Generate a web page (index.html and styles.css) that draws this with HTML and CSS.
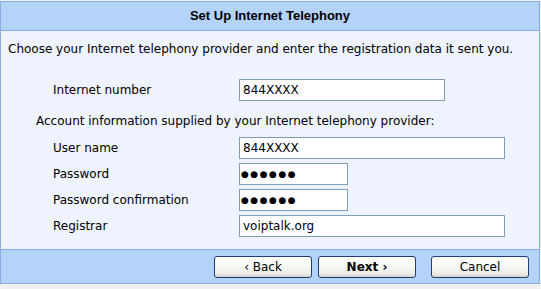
FILE: index.html
```html
<!DOCTYPE html>
<html>
<head>
<meta charset="utf-8">
<link rel="stylesheet" href="styles.css">
</head>
<body>
<div class="dialog">
  <div class="header">Set Up Internet Telephony</div>
  <div class="content">
    <p class="intro">Choose your Internet telephony provider and enter the registration data it sent you.</p>
    <div class="row first">
      <span class="label">Internet number</span>
      <div class="field w-mid">844XXXX</div>
    </div>
    <p class="section">Account information supplied by your Internet telephony provider:</p>
    <div class="rows">
      <div class="row">
        <span class="label">User name</span>
        <div class="field w-long">844XXXX</div>
      </div>
      <div class="row">
        <span class="label">Password</span>
        <div class="field w-short dots">●●●●●●</div>
      </div>
      <div class="row">
        <span class="label">Password confirmation</span>
        <div class="field w-short dots">●●●●●●</div>
      </div>
      <div class="row">
        <span class="label">Registrar</span>
        <div class="field w-long">voiptalk.org</div>
      </div>
    </div>
  </div>
  <div class="footer">
    <button class="btn">‹ Back</button>
    <button class="btn primary">Next ›</button>
    <button class="btn cancel">Cancel</button>
  </div>
</div>
</body>
</html>
```
FILE: styles.css
```css
html, body {
  margin: 0;
  padding: 0;
}
body {
  background: #f0f0f0;
  padding-top: 1px;
  font-family: "DejaVu Sans", Tahoma, sans-serif;
  font-size: 12px;
  color: #000;
}
.dialog {
  width: 538px;
  border: 1px solid #8eaddd;
  background: #eef3fd;
}
.header {
  height: 28px;
  line-height: 28px;
  background: #b4d3fb;
  border-bottom: 1px solid #8eaddd;
  text-align: center;
  font-family: "Liberation Sans", Arial, sans-serif;
  font-weight: bold;
  font-size: 13px;
}
.content {
  height: 218px;
  padding: 11px 0 0 7px;
  box-sizing: border-box;
}
.intro {
  margin: 0;
  line-height: 15px;
}
.row {
  display: flex;
  align-items: center;
  height: 22px;
  padding-left: 45px;
}
.row.first {
  margin-top: 22px;
}
.label {
  width: 186px;
  flex: none;
}
.section {
  margin: 13px 0 0 28px;
  line-height: 15px;
}
.rows {
  margin-top: 8px;
  display: flex;
  flex-direction: column;
  gap: 4px;
}
.field {
  box-sizing: border-box;
  height: 22px;
  line-height: 20px;
  border: 1px solid #7f9db9;
  background: #fff;
  padding-left: 3px;
}
.w-mid { width: 206px; }
.w-long { width: 266px; }
.w-short { width: 109px; }
.dots {
  font-size: 9px;
  letter-spacing: 1.5px;
  padding-left: 1px;
}
.footer {
  border-top: 1px solid #8eaddd;
  background: #b4d3fb;
  display: flex;
  justify-content: flex-end;
  align-items: flex-start;
  padding: 6px 10px 0 0;
  box-sizing: border-box;
  height: 34px;
}
.btn {
  width: 98px;
  height: 22px;
  border: 1px solid #1c3f74;
  border-radius: 3px;
  background: linear-gradient(#ffffff 0%, #f7f7f4 50%, #ecebe6 85%, #d6d0c5 100%);
  font-family: "DejaVu Sans", Tahoma, sans-serif;
  font-size: 12px;
  color: #000;
  padding: 0;
  margin-left: 6px;
}
.btn.primary {
  font-weight: bold;
}
.btn.cancel {
  margin-left: 15px;
}
```
